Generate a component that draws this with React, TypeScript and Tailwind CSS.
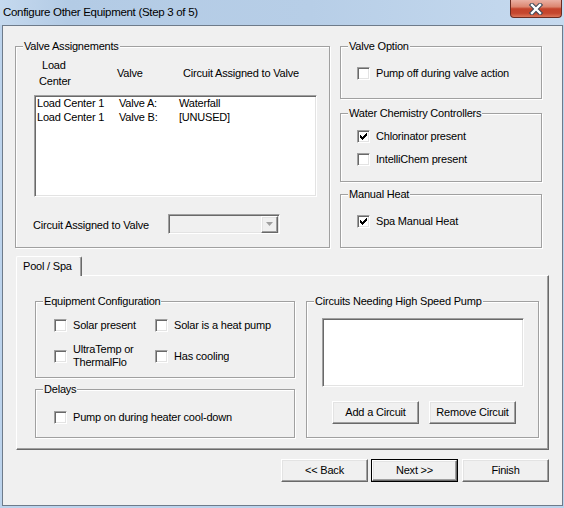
import React from 'react'

const sunken =
  'border border-t-[#a0a0a0] border-l-[#a0a0a0] border-b-white border-r-white shadow-[inset_1px_1px_0_#696969,inset_-1px_-1px_0_#e3e3e3]'
const raised =
  'border border-t-white border-l-white border-b-[#696969] border-r-[#696969] shadow-[inset_-1px_-1px_0_#a0a0a0,inset_1px_1px_0_#e3e3e3]'

function Check({ checked }: { checked?: boolean }) {
  return (
    <span className={`w-[13px] h-[13px] shrink-0 bg-white flex items-center justify-center ${sunken}`}>
      {checked && (
        <svg width="7" height="7" viewBox="0 0 7 7" shapeRendering="crispEdges">
          <path d="M6 0h1v3h-1v1h-1v1h-1v1h-1v1h-1v-1h-1v-1h-1v-3h1v1h1v1h1v-1h1v-1h1z" fill="#000" />
        </svg>
      )}
    </span>
  )
}

function CheckRow({ label, checked }: { label: React.ReactNode; checked?: boolean }) {
  return (
    <div className="flex items-center gap-[6px]">
      <Check checked={checked} />
      <span className="leading-[13px] whitespace-nowrap">{label}</span>
    </div>
  )
}

function Group({ label, className, children }: { label: string; className?: string; children?: React.ReactNode }) {
  return (
    <div className={`relative border border-[#a0a0a0] shadow-[inset_1px_1px_0_#fff,1px_1px_0_#fff] ${className ?? ''}`}>
      <span className="absolute left-[7px] top-[-8px] bg-[#f0f0f0] px-[1px] leading-[14px] whitespace-nowrap">{label}</span>
      {children}
    </div>
  )
}

function Button({ label, isDefault }: { label: string; isDefault?: boolean }) {
  if (isDefault) {
    return (
      <div className="w-[87px] h-[23px] border border-black flex">
        <div className={`flex-1 flex items-center justify-center bg-[#f0f0f0] ${raised}`}>{label}</div>
      </div>
    )
  }
  return (
    <div className={`w-[87px] h-[23px] flex items-center justify-center bg-[#f0f0f0] ${raised}`}>{label}</div>
  )
}

export default function App() {
  return (
    <div className="w-[564px] h-[508px] bg-[#bcd3ec] flex flex-col font-['Liberation_Sans',Arial,sans-serif] text-[11px] tracking-[-0.2px] text-black overflow-hidden">
      {/* title bar */}
      <div className="h-[25px] flex bg-[linear-gradient(90deg,#c5d9ee_0%,#b3cbe5_12%,#b7cee7_55%,#c6daef_100%)]">
        <span className="pl-[3px] pt-[5px] leading-[15px] tracking-[-0.3px] text-[11.5px]">Configure Other Equipment (Step 3 of 5)</span>
        <div className="ml-auto mr-[2px] w-[52px] h-[18px] rounded-b-[4px] border border-t-0 border-[#6b2c22] bg-[linear-gradient(#eab0a3_0%,#dc8670_40%,#c4432b_52%,#c5472f_78%,#dd7659_100%)] flex items-center justify-center">
          <svg width="16" height="12" viewBox="0 0 16 12">
            <path d="M4 2 L12 10 M12 2 L4 10" stroke="#3c4656" strokeWidth="4.4" strokeLinecap="square" />
            <path d="M4 2 L12 10 M12 2 L4 10" stroke="#ffffff" strokeWidth="2.4" strokeLinecap="square" />
          </svg>
        </div>
      </div>

      {/* client area */}
      <div className="ml-[2px] w-[561px] h-[481px] border border-[#6e7b8a] bg-[#f0f0f0] flex flex-col">
        <div className="flex mt-[20px] ml-[12px] gap-[10px]">
          <Group label="Valve Assignements" className="w-[315px] h-[202px]">
            <div className="flex items-center pt-[10px] leading-[16px]">
              <div className="ml-[23px] w-[78px]">
                <div className="pl-[3px]">Load</div>
                <div>Center</div>
              </div>
              <div className="w-[66px]">Valve</div>
              <div>Circuit Assigned to Valve</div>
            </div>
            <div className={`mt-[6px] ml-[18px] w-[283px] h-[102px] bg-white px-[2px] leading-[14px] ${sunken}`}>
              <div className="flex">
                <span className="w-[82px]">Load Center 1</span>
                <span className="w-[60px]">Valve A:</span>
                <span>Waterfall</span>
              </div>
              <div className="flex">
                <span className="w-[82px]">Load Center 1</span>
                <span className="w-[60px]">Valve B:</span>
                <span>[UNUSED]</span>
              </div>
            </div>
            <div className="flex items-center mt-[17px] ml-[17px] h-[20px]">
              <span className="w-[135px] pt-[2px] leading-[13px]">Circuit Assigned to Valve</span>
              <div className={`w-[112px] h-[20px] bg-[#f0f0f0] flex justify-end items-center pr-[1px] ${sunken}`}>
                <div className={`w-[17px] h-[17px] flex items-center justify-center ${raised}`}>
                  <svg width="7" height="4" viewBox="0 0 7 4">
                    <path d="M0 0h7L3.5 4z" fill="#a0a0a0" />
                  </svg>
                </div>
              </div>
            </div>
          </Group>

          <div className="w-[202px] flex flex-col">
            <Group label="Valve Option" className="h-[53px] pt-[20px] pl-[16px]">
              <CheckRow label="Pump off during valve action" />
            </Group>
            <Group label="Water Chemistry Controllers" className="mt-[14px] h-[69px] pt-[16px] pl-[16px] flex flex-col gap-[10px]">
              <CheckRow label="Chlorinator present" checked />
              <CheckRow label="IntelliChem present" />
            </Group>
            <Group label="Manual Heat" className="mt-[12px] h-[54px] pt-[20px] pl-[16px]">
              <CheckRow label="Spa Manual Heat" checked />
            </Group>
          </div>
        </div>

        {/* tab control */}
        <div className="ml-[13px] mt-[8px] flex flex-col">
          <div className="relative z-10 -mb-px w-[66px] h-[20px] bg-[#f0f0f0] border-t border-l border-r border-t-white border-l-white border-r-[#696969] rounded-t-[2px] shadow-[inset_-1px_0_0_#a0a0a0] flex items-center pl-[6px] pb-[1px]">
            Pool / Spa
          </div>
          <div className="w-[533px] h-[175px] border border-t-white border-l-white border-b-[#696969] border-r-[#696969] shadow-[inset_-1px_-1px_0_#a0a0a0] flex gap-[11px] pl-[18px] pt-[25px]">
            <div className="w-[260px] flex flex-col">
              <Group label="Equipment Configuration" className="h-[77px] pl-[18px] pt-[17px]">
                <div className="flex">
                  <div className="w-[101px]">
                    <CheckRow label="Solar present" />
                  </div>
                  <CheckRow label="Solar is a heat pump" />
                </div>
                <div className="flex mt-[11px] h-[26px] items-center">
                  <div className="w-[101px]">
                    <CheckRow
                      label={
                        <span className="block">
                          UltraTemp or
                          <br />
                          ThermalFlo
                        </span>
                      }
                    />
                  </div>
                  <CheckRow label={<span className="block h-[12px] overflow-hidden">Has cooling</span>} />
                </div>
              </Group>
              <Group label="Delays" className="mt-[11px] h-[49px] pl-[18px] pt-[21px]">
                <CheckRow label="Pump on during heater cool-down" />
              </Group>
            </div>
            <Group label="Circuits Needing High Speed Pump" className="w-[233px] h-[137px]">
              <div className={`mt-[16px] ml-[15px] w-[202px] h-[69px] bg-white ${sunken}`} />
              <div className="flex mt-[14px] ml-[25px] gap-[10px]">
                <Button label="Add a Circuit" />
                <Button label="Remove Circuit" />
              </div>
            </Group>
          </div>
        </div>

        {/* wizard buttons */}
        <div className="flex justify-end mt-[9px] pr-[13px]">
          <Button label="<< Back" />
          <div className="ml-[3px]">
            <Button label="Next >>" isDefault />
          </div>
          <div className="ml-[4px]">
            <Button label="Finish" />
          </div>
        </div>
      </div>
    </div>
  )
}
